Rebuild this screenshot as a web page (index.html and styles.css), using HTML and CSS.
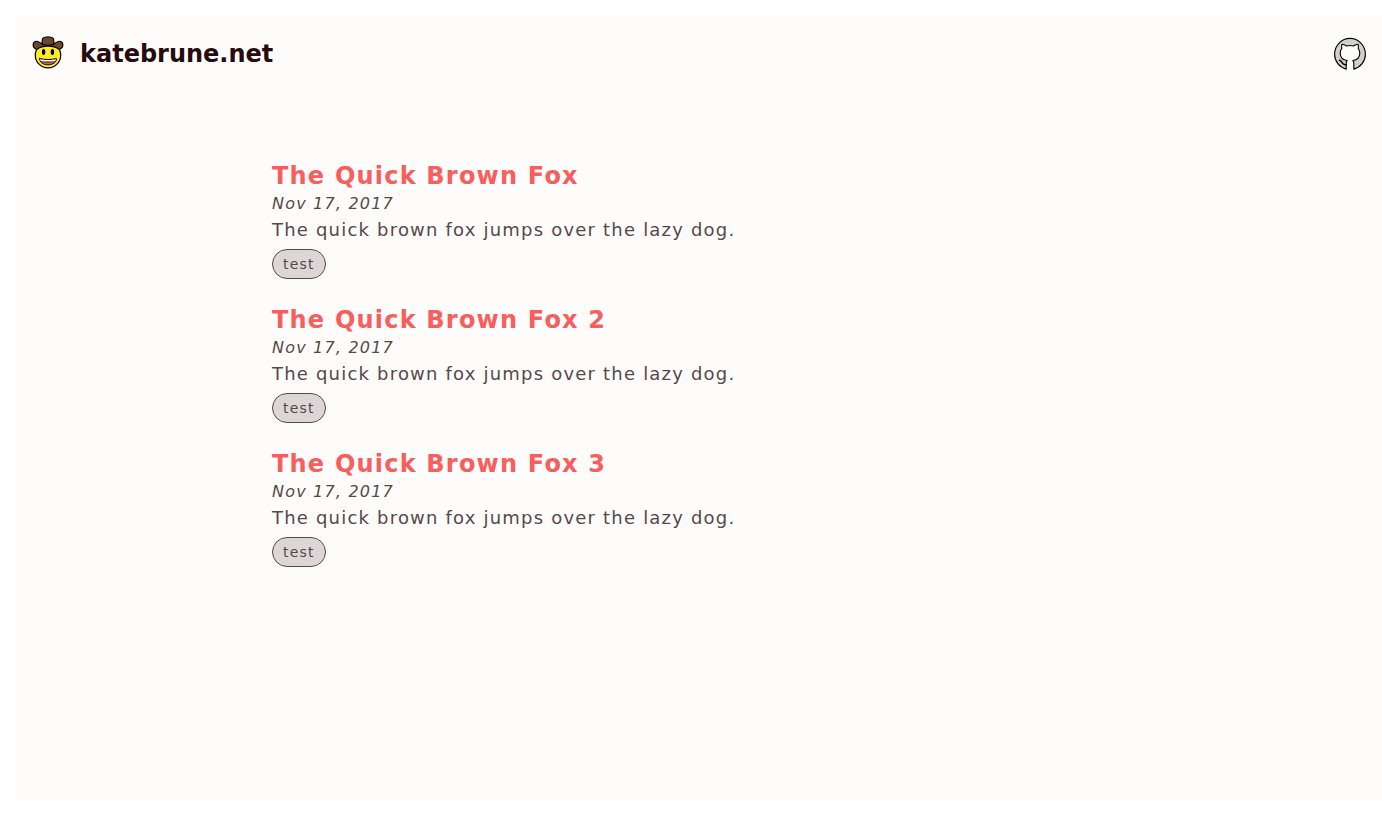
FILE: index.html
```html
<!DOCTYPE html>
<html lang="en">
<head>
<meta charset="utf-8">
<meta name="viewport" content="width=device-width, initial-scale=1">
<title>katebrune.net</title>
<link rel="stylesheet" href="styles.css">
</head>
<body>
<div class="page">
  <header class="header">
    <a class="brand" href="#">
      <svg class="icon" viewBox="0 0 32 32" aria-hidden="true" stroke="#000" stroke-linecap="round" stroke-linejoin="round">
        <circle cx="16" cy="19.200" r="12.700" fill="#fcea2b" stroke-width="1.200"/>
        <path d="M4.800 13.400C2.200 12.400.9 10.200 1.100 8.300 1.400 6.300 3 5.100 4.800 5.200c1.800.1 3.100 1.400 4.600 2.200l.8.300c-.4-3.300-.2-5.300 1.500-5.900 1.300-.3 2.900-1.100 4.300-1.100s3 .8 4.300 1.100c1.700.6 1.900 2.600 1.500 5.900l.8-.3c1.500-.8 2.800-2.100 4.600-2.200 1.800-.1 3.400 1.100 3.700 3.100.2 1.900-1.100 4.100-3.700 5.100-3-2.300-6.800-3.300-11.200-3.300s-8.200 1-11.200 3.300Z" fill="#6a462f" stroke-width="1.100"/>
        <path d="M10.200 8.200c3.600 1.300 8 1.300 11.600 0" fill="none" stroke-width="1.200"/>
        <ellipse cx="11.600" cy="16.100" rx="1.700" ry="3" fill="#000" stroke="none"/>
        <ellipse cx="20.400" cy="16.100" rx="1.700" ry="3" fill="#000" stroke="none"/>
        <path d="M7.500 22.600c5.400 1.200 11.600 1.200 17 0 0 3.800-3.800 6.200-8.500 6.200s-8.500-2.400-8.500-6.200Z" fill="#fff" stroke="none"/>
        <path d="M9.200 26.300c4.400-1 9.200-1 13.600 0-1.500 1.600-4 2.500-6.800 2.500s-5.300-.9-6.800-2.500Z" fill="#ea5a47" stroke="none"/>
        <path d="M8.500 25.500c4.500.8 10.500.8 15 0" fill="none" stroke-width=".7"/>
        <path d="M7.500 22.600c5.400 1.200 11.600 1.200 17 0 0 3.800-3.800 6.200-8.500 6.200s-8.500-2.400-8.500-6.200Z" fill="none" stroke-width="1"/>
      </svg>
      <span class="brand-name">katebrune.net</span>
    </a>
    <a class="github" href="#" aria-label="GitHub">
      <svg class="icon" viewBox="0 0 32 32" aria-hidden="true" stroke="#000" stroke-width="1.100" stroke-linejoin="round" stroke-linecap="round">
        <path d="M12.200 31.100C5.500 29.400.6 23.400.6 16.200.6 7.500 7.500.4 16 .4s15.400 7.100 15.400 15.800c0 7.200-4.900 13.200-11.600 14.900v-6c0-1.200-.3-2-1-2.600 4.600-.6 7-3.200 7-7.500 0-2-.6-3.500-1.600-4.700.4-1.300.3-2.700-.2-4-1.700.1-3.200.8-4.500 1.700-2.300-.6-4.700-.6-7 0-1.300-.9-2.800-1.600-4.500-1.700-.5 1.300-.6 2.700-.2 4-1 1.200-1.600 2.700-1.600 4.700 0 4.300 2.400 6.900 7 7.500-.6.600-1 1.500-1 2.600Z" fill="#d0cfce"/>
        <path d="M5.500 22.300c1.700.3 2.200 2 3.300 3.300.9 1 2.100 1.300 3.400 1.100" fill="none" stroke-width="1.500"/>
      </svg>
    </a>
  </header>
  <main class="posts">
    <article class="post">
      <h2 class="post-title"><a href="#">The Quick Brown Fox</a></h2>
      <time class="post-date" datetime="2017-11-17">Nov 17, 2017</time>
      <p class="post-text">The quick brown fox jumps over the lazy dog.</p>
      <a class="tag" href="#">test</a>
    </article>
    <article class="post">
      <h2 class="post-title"><a href="#">The Quick Brown Fox 2</a></h2>
      <time class="post-date" datetime="2017-11-17">Nov 17, 2017</time>
      <p class="post-text">The quick brown fox jumps over the lazy dog.</p>
      <a class="tag" href="#">test</a>
    </article>
    <article class="post">
      <h2 class="post-title"><a href="#">The Quick Brown Fox 3</a></h2>
      <time class="post-date" datetime="2017-11-17">Nov 17, 2017</time>
      <p class="post-text">The quick brown fox jumps over the lazy dog.</p>
      <a class="tag" href="#">test</a>
    </article>
  </main>
</div>
</body>
</html>
```

FILE: styles.css
```css
* {
  box-sizing: border-box;
}

body {
  margin: 0;
  padding: 16px 0 16px 16px;
  min-height: 100vh;
  display: flex;
  background: #fff;
  color: #574848;
  font-family: "DejaVu Sans", sans-serif;
}

a {
  color: inherit;
  text-decoration: none;
}

.page {
  flex: 1;
  background: #fefcfa;
}

.header {
  display: flex;
  justify-content: space-between;
  align-items: center;
  padding: 20px 16px;
}

.brand {
  display: flex;
  gap: 16px;
  color: #260c0e;
}

.brand-name {
  font-size: 24px;
  font-weight: 700;
  line-height: 36px;
}

.icon {
  display: block;
  width: 32px;
  height: 32px;
  overflow: visible;
}

.posts {
  display: flex;
  flex-direction: column;
  gap: 25px;
  padding: 68px 256px 0;
  letter-spacing: 0.075em;
}

.post {
  display: flex;
  flex-direction: column;
  align-items: flex-start;
}

.post-title {
  margin: 0;
  color: #f85e5e;
  font-size: 24px;
  line-height: 32px;
}

.post-date {
  font-size: 16px;
  font-style: italic;
  line-height: 24px;
}

.post-text {
  margin: 0 0 5px;
  font-size: 18px;
  line-height: 28px;
}

.tag {
  padding: 0 10px;
  border: 1px solid #574848;
  border-radius: 15px;
  background: #dbd7d6;
  font-size: 14px;
  line-height: 28px;
}
```
